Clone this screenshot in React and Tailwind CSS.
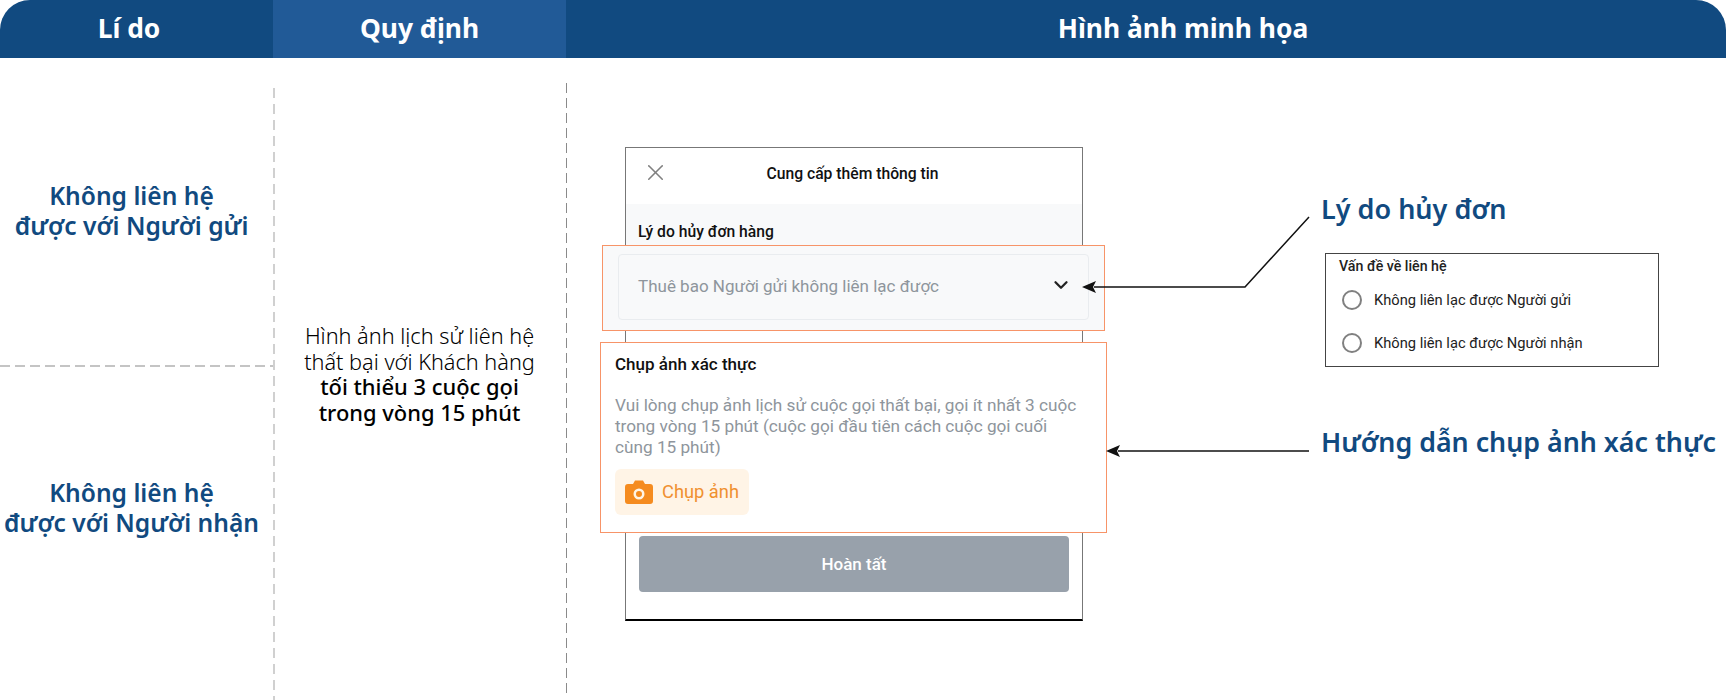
import { X, ChevronDown } from "lucide-react";

const heading = "font-['Noto_Sans',sans-serif]";
const roboto = "font-['Roboto',sans-serif]";

function Header() {
  return (
    <div className={`flex h-[58px] rounded-t-[30px] overflow-hidden bg-[#114a80] text-white text-[26.4px] font-bold ${heading}`}>
      <div className="w-[258px] flex items-center justify-center">Lí do</div>
      <div className="w-[293px] ml-[15px] flex items-center justify-center bg-[#215a97]">Quy định</div>
      <div className="flex-1 pl-[74px] flex items-center justify-center">Hình ảnh minh họa</div>
    </div>
  );
}

function Reasons() {
  return (
    <div className={`w-[273px] shrink-0 flex flex-col text-[#114a80] text-[24.6px] leading-[30px] font-semibold text-center ${heading}`}>
      <div className="h-[307px] pb-[2px] pr-[10px] flex items-center justify-center">
        <p>Không liên hệ<br />được với Người gửi</p>
      </div>
      <div className="h-[2px] w-full bg-[repeating-linear-gradient(to_right,#c4c4c4_0,#c4c4c4_10px,transparent_10px,transparent_15px)]" />
      <div className="pt-[111px] pr-[10px]">
        <p>Không liên hệ<br />được với Người nhận</p>
      </div>
    </div>
  );
}

function Rule() {
  return (
    <div className={`w-[291px] pr-[2px] shrink-0 flex items-center justify-center text-center text-black text-[21.7px] leading-[25.5px] font-light whitespace-nowrap ${heading}`}>
      <p className="mt-[-10px]">
        Hình ảnh lịch sử liên hệ<br />
        thất bại với Khách hàng<br />
        <span className="font-medium text-[21.9px]">tối thiểu 3 cuộc gọi<br />trong vòng 15 phút</span>
      </p>
    </div>
  );
}

function CameraIcon() {
  return (
    <svg width="28" height="24" viewBox="0 0 28 24">
      <path
        fill="#f58b1f"
        fillRule="evenodd"
        d="M3 4h5l2-3.5h8L20 4h5a3 3 0 0 1 3 3v14a3 3 0 0 1-3 3H3a3 3 0 0 1-3-3V7a3 3 0 0 1 3-3zM14 8.5a5.5 5.5 0 1 0 0 11 5.5 5.5 0 0 0 0-11zM14 11a3 3 0 1 1 0 6 3 3 0 0 1 0-6z"
      />
    </svg>
  );
}

function Phone() {
  return (
    <div className={`relative w-[458px] h-[474px] mt-[89px] ml-[58px] shrink-0 border border-[#777] border-b-2 border-b-black bg-white ${roboto}`}>
      <div className="h-[56px] flex items-center justify-center relative">
        <X size={27} strokeWidth={1.4} className="absolute left-[16px] top-[11px] text-[#808080]" />
        <span className="text-[15.7px] font-medium text-[#111] mb-[4px] mr-[3px]">Cung cấp thêm thông tin</span>
      </div>
      <div className="h-[41px] bg-[#f8f9fa] pl-[12px] pt-[18px] text-[15.7px] leading-[20px] font-medium text-[#111]">
        Lý do hủy đơn hàng
      </div>

      {/* chú thích cam phủ lên màn hình */}
      <div className="absolute left-[-24px] top-[97px] w-[503px] h-[86px] border border-[#f79468] bg-[#f8f9fa] px-[15px] py-[8px]">
        <div className="h-[66px] flex items-center justify-between pl-[19px] pr-[16px] border border-[#e9ecef] rounded-[4px]">
          <span className="text-[17px] text-[#8e959c]">Thuê bao Người gửi không liên lạc được</span>
          <ChevronDown size={22} strokeWidth={2.5} className="text-[#222] mb-[4px]" />
        </div>
      </div>
      <div className="absolute left-[-26px] top-[194px] w-[507px] h-[191px] border border-[#f79468] bg-white pl-[14px] pt-[11px]">
        <div className="text-[17px] leading-[20px] font-medium text-[#111]">Chụp ảnh xác thực</div>
        <p className="mt-[21px] text-[17.2px] leading-[21px] text-[#8e959c] whitespace-nowrap">
          Vui lòng chụp ảnh lịch sử cuộc gọi thất bại, gọi ít nhất 3 cuộc<br />
          trong vòng 15 phút (cuộc gọi đầu tiên cách cuộc gọi cuối<br />
          cùng 15 phút)
        </p>
        <div className="mt-[11px] w-[134px] h-[46px] flex items-center gap-[9px] pl-[10px] rounded-[6px] bg-[#fff4e6]">
          <CameraIcon />
          <span className="text-[18.3px] text-[#f09030]">Chụp ảnh</span>
        </div>
      </div>

      <div className="absolute left-[13px] right-[13px] top-[388px] h-[56px] pt-[2px] flex items-center justify-center rounded-[4px] bg-[#98a1ab] text-white text-[17px] font-medium">
        Hoàn tất
      </div>
    </div>
  );
}

function Notes() {
  return (
    <div className="ml-[238px] flex-1 flex flex-col">
      <div className={`mt-[133px] text-[27px] leading-[36px] font-semibold text-[#114a80] whitespace-nowrap ${heading}`}>Lý do hủy đơn</div>
      <div className={`mt-[26px] ml-[4px] w-[334px] h-[114px] border border-[#444] pl-[13px] pt-[3px] text-[#222] ${roboto}`}>
        <div className="text-[14.2px] leading-[18px] font-medium">Vấn đề về liên hệ</div>
        <div className="mt-[14px] ml-[3px] flex items-center gap-[12px] text-[14.7px] leading-[22px]">
          <span className="w-[20px] h-[20px] rounded-full border-2 border-[#808080]" />
          Không liên lạc được Người gửi
        </div>
        <div className="mt-[21px] ml-[3px] flex items-center gap-[12px] text-[14.7px] leading-[22px]">
          <span className="w-[20px] h-[20px] rounded-full border-2 border-[#808080]" />
          Không liên lạc được Người nhận
        </div>
      </div>
      <div className={`mt-[57px] text-[26.8px] leading-[36px] font-semibold text-[#114a80] whitespace-nowrap ${heading}`}>Hướng dẫn chụp ảnh xác thực</div>
    </div>
  );
}

function Arrows() {
  return (
    <svg className="absolute left-0 top-0 pointer-events-none" width="1726" height="700" fill="none">
      <path d="M1309 217 L1245 287 H1094" stroke="#111" strokeWidth="1.5" />
      <path d="M1082 287 L1096 281 L1093 287 L1096 293 Z" fill="#111" />
      <path d="M1309 451 H1118" stroke="#111" strokeWidth="1.5" />
      <path d="M1106 451 L1120 445 L1117 451 L1120 457 Z" fill="#111" />
    </svg>
  );
}

export default function App() {
  return (
    <div className="relative w-[1726px] h-[700px] overflow-hidden bg-white">
      <Header />
      <div className="flex h-[642px]">
        <Reasons />
        <div className="w-[2px] h-[612px] mt-[30px] shrink-0 bg-[repeating-linear-gradient(to_bottom,#d0d0d0_0,#d0d0d0_10px,transparent_10px,transparent_16px)]" />
        <Rule />
        <div className="w-[1px] h-[612px] mt-[25px] shrink-0 bg-[repeating-linear-gradient(to_bottom,#8a8a8a_0,#8a8a8a_10px,transparent_10px,transparent_15px)]" />
        <Phone />
        <Notes />
      </div>
      <Arrows />
    </div>
  );
}
